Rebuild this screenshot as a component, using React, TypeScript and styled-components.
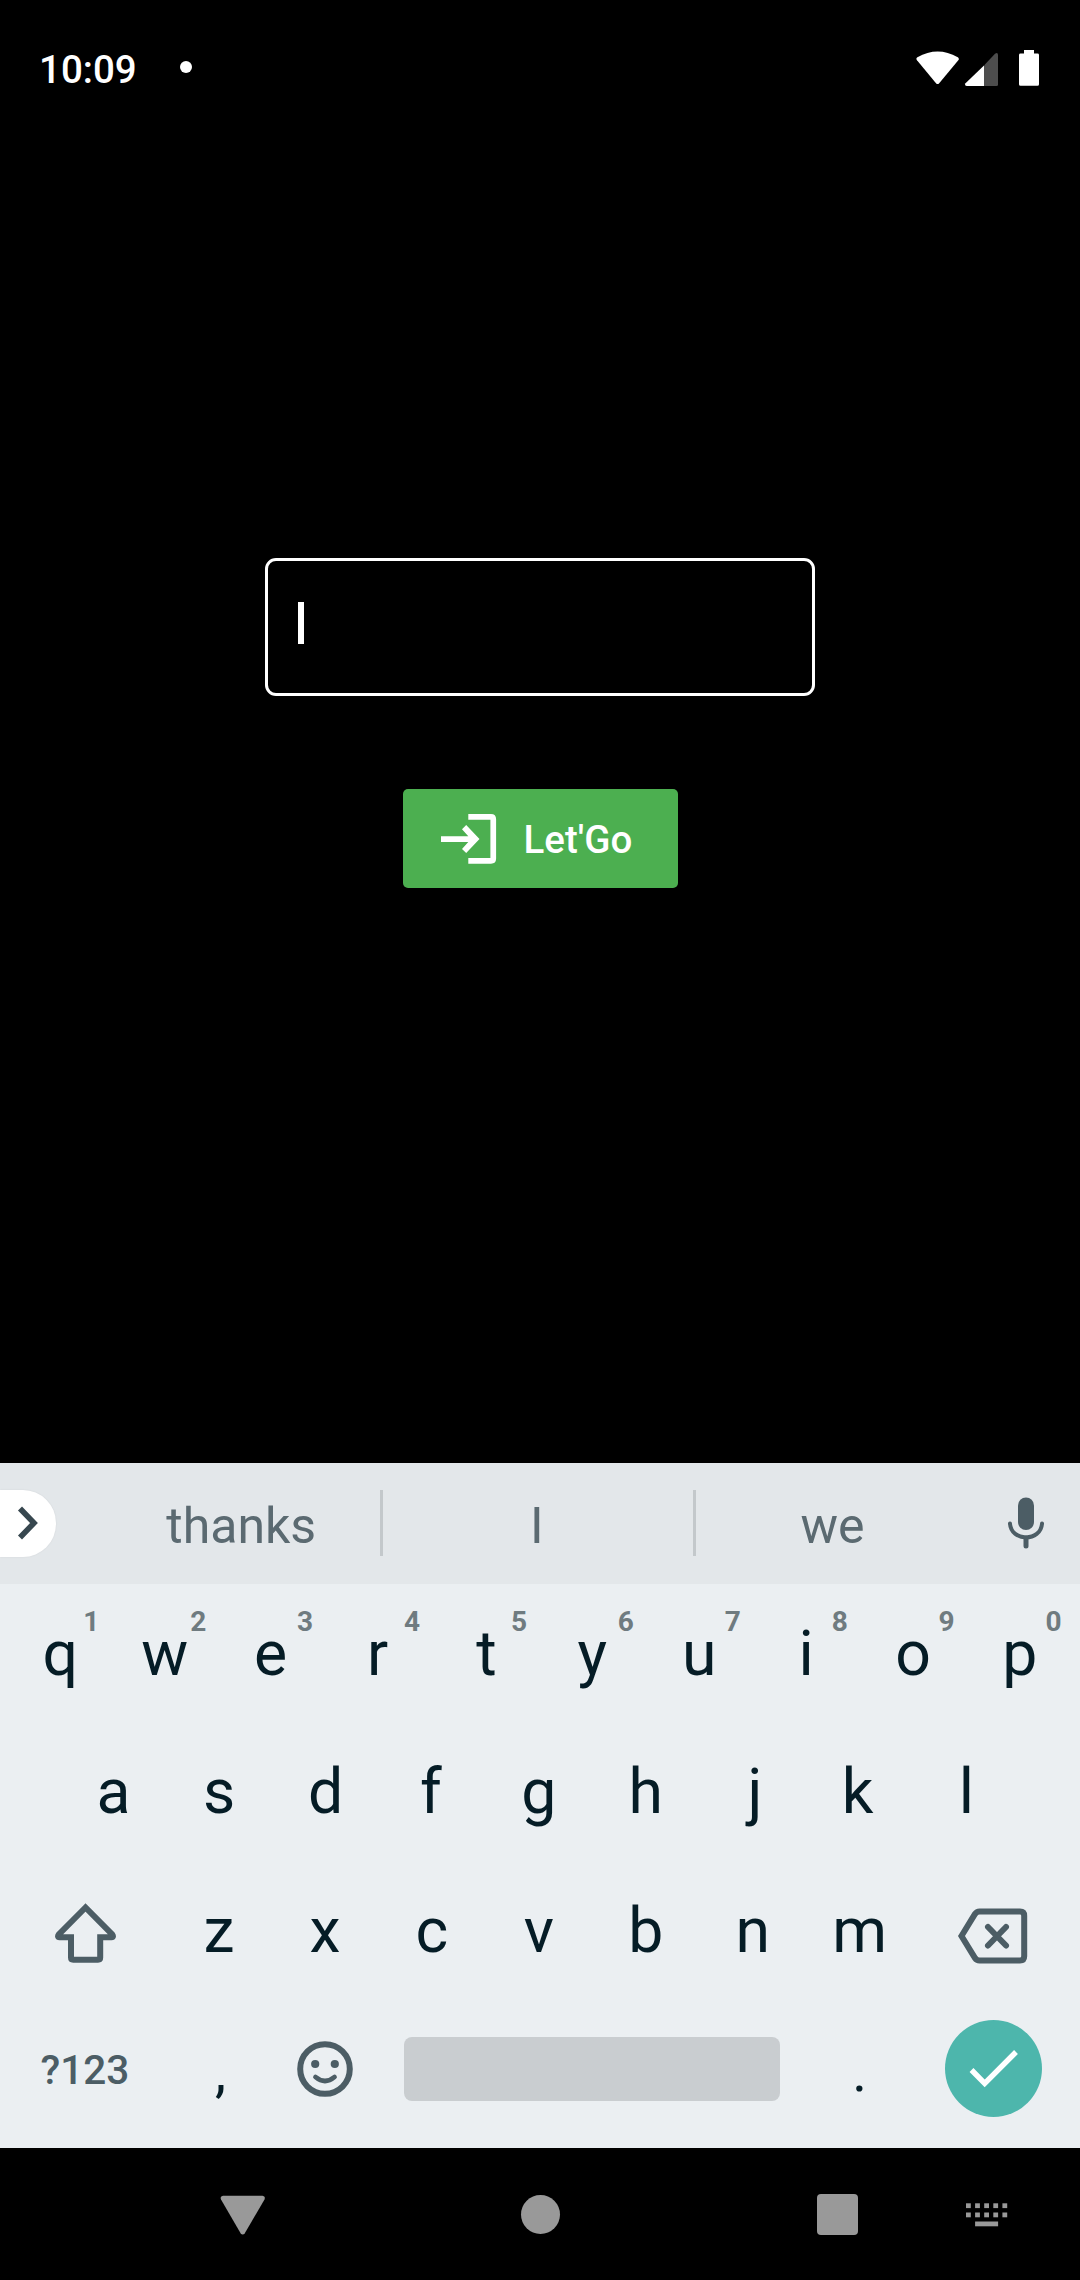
import React from "react";
import styled, { createGlobalStyle } from "styled-components";

const GlobalStyle = createGlobalStyle`
  * { box-sizing: border-box; }
  body { margin: 0; background: #000; }
`;

const INK = "#051c26";
const SLATE = "#4c5d65";
const NAV_GREY = "#999999";

const Screen = styled.div`
  width: 1080px;
  height: 2280px;
  display: flex;
  flex-direction: column;
  overflow: hidden;
  background: #000;
  font-family: Roboto, "Liberation Sans", sans-serif;
`;

const StatusBar = styled.header`
  height: 136px;
  padding: 0 40px 0 39px;
  display: flex;
  align-items: center;
  color: #fff;
`;

const Clock = styled.span`
  font-size: 38.5px;
  font-weight: 500;
  line-height: 46px;
  margin-top: 4px;
  width: 141px;
`;

const NoticeDot = styled.span`
  width: 12px;
  height: 12px;
  border-radius: 50%;
  background: #fff;
  margin-top: -2px;
`;

const StatusIcons = styled.svg`
  display: block;
  margin-left: auto;
`;

const Content = styled.main`
  flex: none;
  height: 1327px;
  padding-top: 422px;
  display: flex;
  flex-direction: column;
  align-items: center;
`;

const TextField = styled.div`
  width: 550px;
  height: 138px;
  border: 3px solid #fff;
  border-radius: 11px;
  padding: 41px 0 0 30px;
`;

const Caret = styled.span`
  display: block;
  width: 6px;
  height: 42px;
  background: #fff;
`;

const GoButton = styled.button`
  width: 275px;
  height: 99px;
  margin-top: 93px;
  padding: 0 0 0 38.5px;
  display: flex;
  align-items: center;
  gap: 24.5px;
  border: 0;
  border-radius: 5px;
  background: #4caf50;
  color: #fff;
  font-family: inherit;
  font-size: 38.5px;
  font-weight: 500;
  line-height: 46px;
`;

const GoLabel = styled.span`
  padding-top: 2px;
`;

const Keyboard = styled.section`
  flex: none;
  height: 685px;
  background: #ebeff2;
  color: ${INK};
`;

const Suggestions = styled.div`
  height: 121px;
  padding-bottom: 1px;
  display: flex;
  align-items: center;
  background: #e3e7ea;
`;

const ExpandChip = styled.div`
  width: 55.5px;
  height: 67px;
  margin-right: 44.5px;
  border-radius: 0 33px 33px 0;
  background: #fff;
  box-shadow: 0 0 2px rgba(0, 0, 0, 0.08);
`;

const Suggestion = styled.span<{ $width: number; $shift?: number }>`
  width: ${(p) => p.$width}px;
  text-align: center;
  text-indent: ${(p) => p.$shift ?? 0}px;
  font-size: 50px;
  line-height: 60px;
  padding-top: 6px;
  color: #5b6a71;
`;

const Divider = styled.span`
  width: 3px;
  height: 66px;
  background: #c3c8cb;
`;

const MicSlot = styled.div`
  flex: 1;
  padding-left: 39px;
`;

const Row = styled.div<{ $height?: number; $inset?: number }>`
  height: ${(p) => p.$height ?? 139}px;
  padding: 0 ${(p) => (p.$inset ?? 5.5) + 1.2}px 0 ${(p) => (p.$inset ?? 5.5) - 1.2}px;
  display: flex;
`;

const Key = styled.div<{ $span?: number; $drop?: number }>`
  position: relative;
  flex: ${(p) => p.$span ?? 1} 1 0;
  min-width: 0;
  display: flex;
  align-items: center;
  justify-content: center;
  padding-top: ${(p) => p.$drop ?? 0}px;
  font-size: 62.5px;
  line-height: 74px;
`;

const Letter = styled.span<{ $nudge?: number }>`
  margin-left: ${(p) => (p.$nudge ?? 0) * 2}px;
`;

const Punctuation = styled.span<{ $nudge?: number }>`
  margin-left: ${(p) => (p.$nudge ?? 0) * 2}px;
  font-size: 56px;
  line-height: 66px;
`;

const Hint = styled.sup`
  position: absolute;
  top: 21px;
  left: 79px;
  font-size: 28px;
  font-weight: 700;
  line-height: 34px;
  color: #6f7b80;
`;

const SymbolsLabel = styled.span`
  margin-left: 1px;
  font-size: 40.5px;
  font-weight: 500;
  line-height: 48px;
  color: ${SLATE};
`;

const SpaceBar = styled.span`
  width: 376px;
  height: 64px;
  border-radius: 8px;
  background: #c9cdd0;
`;

const DoneButton = styled.span`
  width: 97px;
  height: 97px;
  border-radius: 50%;
  background: #4db6ac;
  display: flex;
`;

const Icon = styled.svg`
  display: block;
  flex: none;
`;

const NavBar = styled.nav`
  height: 132px;
  padding: 1px 0 0 220px;
  display: flex;
  align-items: center;
  color: ${NAV_GREY};
`;

const HomeDot = styled.span`
  width: 39px;
  height: 39px;
  margin-left: 256px;
  border-radius: 50%;
  background: currentColor;
`;

const RecentSquare = styled.span`
  width: 41px;
  height: 41px;
  margin: 0 108px 0 257px;
  border-radius: 4px;
  background: currentColor;
`;

const TOP = "qwertyuiop".split("");
const MIDDLE = "asdfghjkl".split("");
const BOTTOM = "zxcvbnm".split("");

// Optical centring corrections, in pixels.
const NUDGE: Record<string, number> = {
  q: 2.4, e: -1, r: -1, t: 1, a: 2.2, s: 1, d: 0.5, f: -1, j: 2.4, k: -2, z: 0.8,
};

export default function App() {
  return (
    <>
      <GlobalStyle />
      <Screen>
        <StatusBar>
          <Clock>10:09</Clock>
          <NoticeDot />
          <StatusIcons width="124" height="38" viewBox="916 48 124 38" fill="#fff">
            <path d="M917.4 56.2Q937.6 44.8 957.8 56.2Q959.6 57.6 958.3 59.3L939.2 82.2Q937.6 84 936 82.2L917 59.3Q915.6 57.6 917.4 56.2Z" />
            <path d="M984 64.5V85H967Q964 84.6 965.5 82.3Z" />
            <path d="M984 64.5L995 52.8Q997.8 50.8 998 54V83.5Q998 85 996.5 85H984Z" fill="#4d4d4d" />
            <path d="M1024 49H1034V52.6H1037.5Q1039 52.6 1039 54V83.3Q1039 84.8 1037.5 84.8H1020.5Q1019 84.8 1019 83.3V54Q1019 52.6 1020.5 52.6H1024Z" />
          </StatusIcons>
        </StatusBar>

        <Content>
          <TextField>
            <Caret />
          </TextField>
          <GoButton>
            <Icon width="58" height="52" viewBox="441 813 58 52" fill="#fff">
              <path d="M441 836.2H468.3L462 829.2L466.2 825L479.5 839L466.2 853L462 849L468.3 842H441Z" />
              <path d="M468.3 814H491Q496.1 814 496.1 819.2V858.5Q496.1 863.7 491 863.7H468.3V858H490.4V819.7H468.3Z" />
            </Icon>
            <GoLabel>Let'Go</GoLabel>
          </GoButton>
        </Content>

        <Keyboard>
          <Suggestions>
            <ExpandChip>
              <Icon width="55" height="66" viewBox="0 0 55 66" fill="none" stroke="#37474f" strokeWidth="5.6">
                <path d="M20 18.5L34 33L20 47.5" />
              </Icon>
            </ExpandChip>
            <Suggestion $width={280} $shift={2.5}>thanks</Suggestion>
            <Divider />
            <Suggestion $width={310} $shift={-2.5}>I</Suggestion>
            <Divider />
            <Suggestion $width={273}>we</Suggestion>
            <MicSlot>
              <Icon width="36" height="52" viewBox="0 0 36 52" fill="none" stroke={SLATE} strokeLinecap="round">
                <rect x="10" y="0.5" width="16" height="32.5" rx="8" fill={SLATE} stroke="none" />
                <path d="M2 26.5C3 45 33 45 34 26.5" strokeWidth="4" />
                <path d="M18 41V49" strokeWidth="5" />
              </Icon>
            </MicSlot>
          </Suggestions>

          <Row $height={137}>
            {TOP.map((letter, i) => (
              <Key key={letter} $drop={2}>
                <Letter $nudge={NUDGE[letter]}>{letter}</Letter>
                <Hint>{(i + 1) % 10}</Hint>
              </Key>
            ))}
          </Row>
          <Row $inset={59}>
            {MIDDLE.map((letter) => (
              <Key key={letter} $drop={2}>
                <Letter $nudge={NUDGE[letter]}>{letter}</Letter>
              </Key>
            ))}
          </Row>
          <Row>
            <Key $span={1.5} $drop={6}>
              <Icon width="64" height="64" viewBox="52 1901 64 64" fill="none" stroke={SLATE} strokeWidth="6">
                <path d="M85.5 1907.5L58.8 1934.5Q57 1937.2 59.5 1937.2H71V1957.5Q71 1959.7 73.2 1959.7H98Q100.2 1959.7 100.2 1957.5V1937.2H111.5Q114 1937.2 112.2 1934.5Z" />
              </Icon>
            </Key>
            {BOTTOM.map((letter) => (
              <Key key={letter} $drop={2}>
                <Letter $nudge={NUDGE[letter]}>{letter}</Letter>
              </Key>
            ))}
            <Key $span={1.5} $drop={13}>
              <Icon width="72" height="58" viewBox="957 1907.5 72 58" fill="none" stroke={SLATE} strokeWidth="6">
                <path d="M961.5 1936.5L975 1914.5Q976.7 1912 979.5 1912H1020Q1024.2 1912 1024.2 1916.2V1956.8Q1024.2 1961 1020 1961H979.5Q976.7 1961 975 1958.5Z" />
                <path d="M988 1927.5L1006 1946M1006 1927.5L988 1946" strokeLinecap="round" />
              </Icon>
            </Key>
          </Row>
          <Row>
            <Key $span={1.5} $drop={3}>
              <SymbolsLabel>?123</SymbolsLabel>
            </Key>
            <Key $drop={6}>
              <Punctuation $nudge={2.4}>,</Punctuation>
            </Key>
            <Key>
              <Icon width="58" height="58" viewBox="-29 -29 58 58" fill="none" stroke={SLATE} strokeWidth="6">
                <circle r="24.8" />
                <circle cx="-9.8" cy="-5" r="4.1" fill={SLATE} stroke="none" />
                <circle cx="9.8" cy="-5" r="4.1" fill={SLATE} stroke="none" />
                <path d="M-9.5 8Q0 16 9.5 8" strokeWidth="4.8" strokeLinecap="round" />
              </Icon>
            </Key>
            <Key $span={4}>
              <SpaceBar />
            </Key>
            <Key $drop={6}>
              <Punctuation>.</Punctuation>
            </Key>
            <Key $span={1.5}>
              <DoneButton>
                <Icon width="97" height="97" viewBox="945 2020 97 97" fill="none" stroke="#fff" strokeWidth="5.4">
                  <path d="M971.5 2070L984.7 2083.5L1016 2052" />
                </Icon>
              </DoneButton>
            </Key>
          </Row>
        </Keyboard>

        <NavBar>
          <Icon width="45" height="40" viewBox="220 2196.5 45 40" fill="currentColor">
            <path d="M223 2197.3H262.5Q265.8 2197.7 264.5 2201L244.8 2234.8Q242.7 2237.2 240.6 2234.8L221 2201Q219.7 2197.7 223 2197.3Z" />
          </Icon>
          <HomeDot />
          <RecentSquare />
          <Icon width="42" height="24" viewBox="0 0 42 24" fill="currentColor">
            {[0, 9.1, 18.2, 27.3, 36.4].map((x) => (
              <React.Fragment key={x}>
                <rect x={x} y="0.3" width="4.8" height="4.8" />
                <rect x={x} y="9.5" width="4.8" height="4.8" />
              </React.Fragment>
            ))}
            <rect x="9.1" y="18.5" width="23" height="4.8" />
          </Icon>
        </NavBar>
      </Screen>
    </>
  );
}
